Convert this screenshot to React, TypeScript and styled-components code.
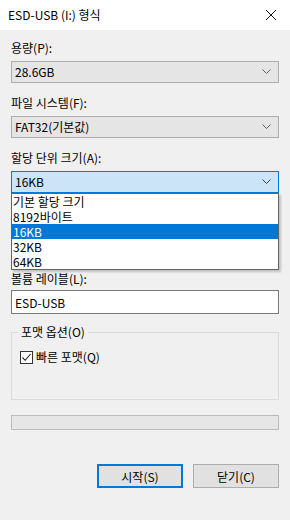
import React from "react"
import styled, { createGlobalStyle } from "styled-components"

const GlobalStyle = createGlobalStyle`
    html, body {
        margin: 0;
        padding: 0;
        background: #f0f0f0;
    }
    body {
        width: 290px;
        height: 520px;
        overflow: hidden;
        font-family: "Noto Sans CJK KR", "Noto Sans", sans-serif;
        font-size: 12px;
        color: #000;
    }
`

const sizes = ["기본 할당 크기", "8192바이트", "16KB", "32KB", "64KB"]

const Chevron: React.FC<{ dark?: boolean }> = ({ dark }) => (
    <svg width="9" height="6" viewBox="0 0 9 6">
        <path d="M0.5 0.5 L4.5 4.5 L8.5 0.5" fill="none" stroke={dark ? "#404040" : "#606060"} strokeWidth="1" />
    </svg>
)

const App: React.FC = () => {
    return (
        <Window>
            <GlobalStyle />
            <TitleBar>
                <Title>ESD-USB (I:) 형식</Title>
                <CloseIcon width="12" height="12" viewBox="0 0 12 12">
                    <path d="M1 1 L11 11 M11 1 L1 11" stroke="#111" strokeWidth="1" />
                </CloseIcon>
            </TitleBar>

            <Body>
                <Field>
                    <Label>용량(P):</Label>
                    <Select>
                        <span>28.6GB</span>
                        <Chevron />
                    </Select>
                </Field>

                <Field>
                    <Label>파일 시스템(F):</Label>
                    <Select>
                        <span>FAT32(기본값)</span>
                        <Chevron />
                    </Select>
                </Field>

                <Field>
                    <Label>할당 단위 크기(A):</Label>
                    <DropWrap>
                        <Select $open>
                            <span>16KB</span>
                            <Chevron dark />
                        </Select>
                        <ListBox>
                            {sizes.map((s) => (
                                <ListItem key={s} $selected={s === "16KB"}>{s}</ListItem>
                            ))}
                        </ListBox>
                    </DropWrap>
                </Field>

                {/* hidden under the open list, as in the real dialog */}
                <RestoreButton aria-hidden />

                <Field>
                    <Label>볼륨 레이블(L):</Label>
                    <TextInput>ESD-USB</TextInput>
                </Field>

                <GroupBox>
                    <GroupLegend>포맷 옵션(O)</GroupLegend>
                    <CheckRow>
                        <CheckBox>
                            <svg width="11" height="11" viewBox="0 0 11 11">
                                <path d="M1.5 5.5 L4.2 8.3 L9.6 2" fill="none" stroke="#222" strokeWidth="1.1" />
                            </svg>
                        </CheckBox>
                        <span>빠른 포맷(Q)</span>
                    </CheckRow>
                </GroupBox>

                <Progress />

                <ButtonRow>
                    <Button $primary>시작(S)</Button>
                    <Button>닫기(C)</Button>
                </ButtonRow>
            </Body>
        </Window>
    )
}

export default App


// Window
const Window = styled.div`
    width: 290px;
    height: 520px;
    background: #f0f0f0;
    display: flex;
    flex-direction: column;
`

const TitleBar = styled.div`
    height: 30px;
    background: #fff;
    display: flex;
    align-items: center;
    justify-content: space-between;
    padding: 0 13px 0 8px;
    box-sizing: border-box;
`

const Title = styled.span`
    font-size: 12px;
    line-height: 16px;
`

const CloseIcon = styled.svg`
    display: block;
`

const Body = styled.div`
    padding: 10px 11px 0 11px;
    display: flex;
    flex-direction: column;
`

// Fields
const Field = styled.div`
    display: flex;
    flex-direction: column;
    gap: 5px;
    margin-bottom: 12px;
`

const Label = styled.div`
    line-height: 16px;
    height: 16px;
`

const Select = styled.div<{ $open?: boolean }>`
    height: 22px;
    box-sizing: border-box;
    border: 1px solid ${(p) => (p.$open ? "#0078d7" : "#adadad")};
    background: ${(p) => (p.$open ? "#cce4f7" : "#e5e5e5")};
    display: flex;
    align-items: center;
    justify-content: space-between;
    padding: 0 7px 0 3px;
    line-height: 16px;
`

const DropWrap = styled.div`
    position: relative;
`

const ListBox = styled.div`
    position: absolute;
    top: 22px;
    left: 0;
    right: 0;
    background: #fff;
    border: 1px solid #646464;
    box-shadow: 2px 2px 2px rgba(0, 0, 0, 0.2);
    z-index: 5;
`

const ListItem = styled.div<{ $selected?: boolean }>`
    height: 15px;
    line-height: 15px;
    overflow: hidden;
    padding-left: 1px;
    font-size: 12px;
    background: ${(p) => (p.$selected ? "#0078d7" : "transparent")};
    color: ${(p) => (p.$selected ? "#fff" : "#000")};
`

const RestoreButton = styled.div`
    width: 150px;
    height: 23px;
    margin-bottom: 43px;
    border: 1px solid #adadad;
    background: #e1e1e1;
    box-sizing: border-box;
`

const TextInput = styled.div`
    height: 24px;
    margin-top: -2px;
    box-sizing: border-box;
    border: 1px solid #7a7a7a;
    background: #fff;
    display: flex;
    align-items: center;
    padding: 0 3px;
`

// Group
const GroupBox = styled.div`
    position: relative;
    margin-top: 6px;
    height: 68px;
    box-sizing: border-box;
    border: 1px solid #dcdcdc;
    padding: 16px 8px 0 8px;
`

const GroupLegend = styled.span`
    position: absolute;
    top: -9px;
    left: 6px;
    padding: 0 3px;
    background: #f0f0f0;
    line-height: 16px;
`

const CheckRow = styled.div`
    display: flex;
    align-items: center;
    gap: 3px;
    line-height: 16px;
`

const CheckBox = styled.div`
    width: 13px;
    height: 13px;
    box-sizing: border-box;
    border: 1px solid #333;
    background: #fff;
    display: flex;
    align-items: center;
    justify-content: center;
`

const Progress = styled.div`
    height: 15px;
    margin-top: 15px;
    box-sizing: border-box;
    border: 1px solid #bcbcbc;
    background: #e6e6e6;
`

const ButtonRow = styled.div`
    display: flex;
    justify-content: flex-end;
    gap: 10px;
    margin-top: 34px;
`

const Button = styled.div<{ $primary?: boolean }>`
    width: 86px;
    height: 24px;
    box-sizing: border-box;
    border: ${(p) => (p.$primary ? "2px solid #0078d7" : "1px solid #adadad")};
    background: #e1e1e1;
    display: flex;
    align-items: center;
    justify-content: center;
`
